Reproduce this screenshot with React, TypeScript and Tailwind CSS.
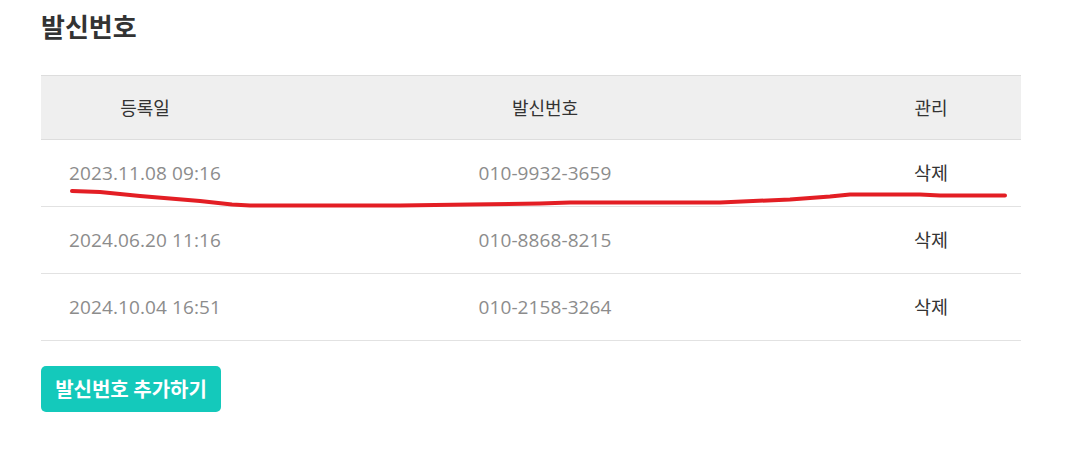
import React from "react";

const rows = [
  { date: "2023.11.08 09:16", num: "010-9932-3659" },
  { date: "2024.06.20 11:16", num: "010-8868-8215" },
  { date: "2024.10.04 16:51", num: "010-2158-3264" },
];

const KR = { fontFamily: '"Noto Sans CJK KR", "Noto Sans", sans-serif' };
const NUM = { fontFamily: '"Open Sans", "Noto Sans CJK KR", sans-serif' };

export default function App() {
  return (
    <div className="relative w-[1077px] h-[453px] bg-white overflow-hidden" style={KR}>
      <div className="pl-[41px] pt-[8px] w-[1021px]">
        <h1 className="text-[26px] leading-[36px] font-bold text-[#333333] mb-[31px]">발신번호</h1>
        <div className="w-[980px]">
          <div className="flex h-[65px] items-center bg-[#efefef] border-t border-b border-[#dddddd] text-[18px] text-[#333333]">
            <div className="w-[208px] text-center">등록일</div>
            <div className="w-[592px] text-center">발신번호</div>
            <div className="w-[180px] text-center">관리</div>
          </div>
          {rows.map((r) => (
            <div key={r.date} className="flex h-[67px] items-center border-b border-[#e2e2e2]">
              <div className="w-[208px] text-center text-[19px] text-[#8c8c8c] tracking-[0.1px]" style={NUM}>{r.date}</div>
              <div className="w-[592px] text-center text-[19px] text-[#8c8c8c] tracking-[0.1px]" style={NUM}>{r.num}</div>
              <div className="w-[180px] text-center text-[18.5px] text-[#333333]">삭제</div>
            </div>
          ))}
        </div>
        <button className="mt-[25px] w-[180px] h-[46px] rounded-[5px] bg-[#14c9bb] text-white text-[20px] font-bold flex items-center justify-center">
          발신번호 추가하기
        </button>
      </div>
      <svg className="absolute left-0 top-0 pointer-events-none" width="1077" height="453" viewBox="0 0 1077 453">
        <path
          d="M72 191 L100 192 L140 196 L200 201 L232 204.5 L250 205.5 L400 205.5 L470 204.5 L540 203.5 L570 202.5 L720 202.5 L790 199.5 L830 196.5 L850 194.5 L920 194.5 L940 195.5 L1005 195.5"
          fill="none"
          stroke="#e31e24"
          strokeWidth="4"
          strokeLinecap="round"
          strokeLinejoin="round"
        />
      </svg>
    </div>
  );
}
